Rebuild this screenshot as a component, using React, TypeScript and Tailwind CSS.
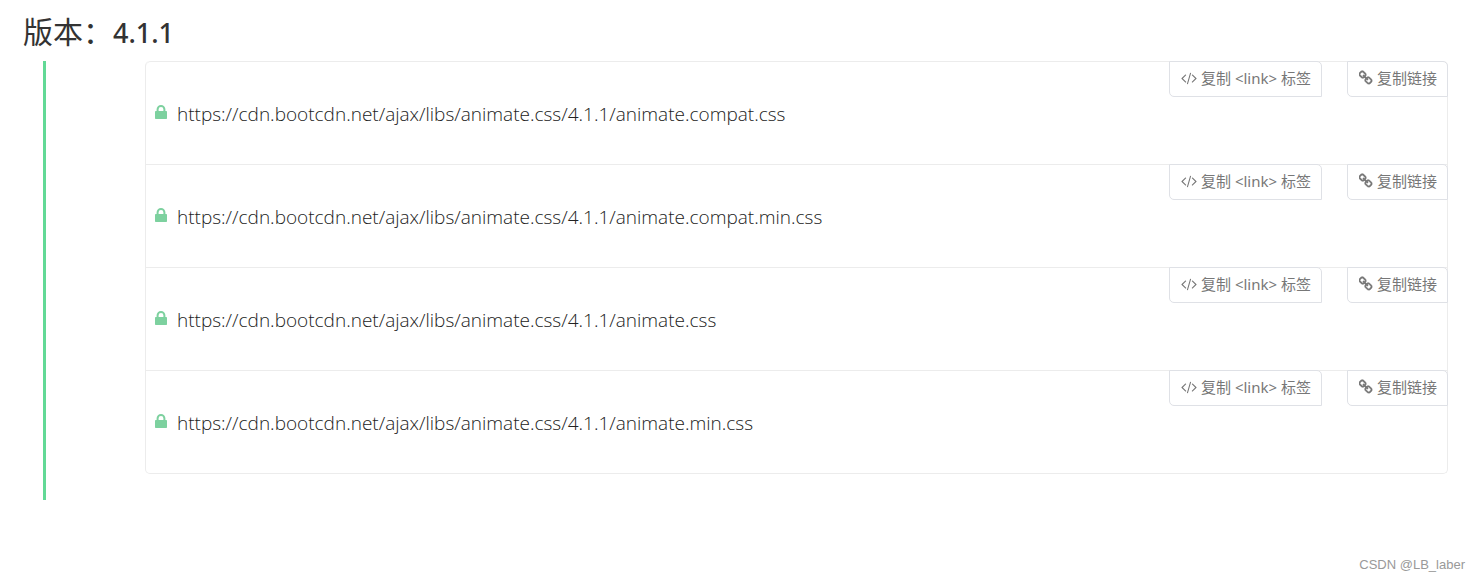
import React from "react";

const BASE = "https://cdn.bootcdn.net/ajax/libs/animate.css/4.1.1/";
const FILES = [
  "animate.compat.css",
  "animate.compat.min.css",
  "animate.css",
  "animate.min.css",
];

function LockIcon() {
  return (
    <svg viewBox="0 0 12 14" className="mb-1 h-3.5 w-3 shrink-0" aria-hidden="true">
      <path d="M2.600 7V4.300a3.400 3.300 0 0 1 6.800 0V7" fill="none" stroke="#7dd19f" strokeWidth="2" />
      <rect x="0" y="6" width="12" height="8" rx="0.700" fill="#7dd19f" />
    </svg>
  );
}

function CodeIcon() {
  return (
    <svg viewBox="0 0 1920 1792" className="h-4 w-4 shrink-0" fill="currentColor" aria-hidden="true">
      <path d="M617 1399l-50 50q-10 10-23 10t-23-10l-466-466q-10-10-10-23t10-23l466-466q10-10 23-10t23 10l50 50q10 10 10 23t-10 23l-393 393 393 393q10 10 10 23t-10 23zm591-1067l-373 1291q-4 13-15.500 19.500t-23.500 2.500l-62-17q-13-4-19.500-15.500t-2.500-24.500l373-1291q4-13 15.500-19.500t23.500-2.500l62 17q13 4 19.500 15.500t2.500 24.500zm657 651l-466 466q-10 10-23 10t-23-10l-50-50q-10-10-10-23t10-23l393-393-393-393q-10-10-10-23t10-23l50-50q10-10 23-10t23 10l466 466q10 10 10 23t-10 23z" />
    </svg>
  );
}

function LinkIcon() {
  return (
    <svg viewBox="64 0 1664 1792" className="h-4 w-3.5 shrink-0" fill="currentColor" stroke="currentColor" strokeWidth="30" aria-hidden="true">
      <path d="M1456 1216q0-40-28-68l-208-208q-28-28-68-28-42 0-72 32 3 3 19 18.500t21.500 21.500 15 19 13 25.500 3.500 27.500q0 40-28 68t-68 28q-15 0-27.500-3.500t-25.500-13-19-15-21.500-21.500-18.500-19q-33 31-33 73 0 40 28 68l206 207q27 27 68 27 40 0 68-26l147-146q28-28 28-67zm-703-705q0-40-28-68l-206-207q-28-28-68-28-39 0-68 27l-147 146q-28 28-28 67 0 40 28 68l208 208q27 27 68 27 42 0 72-31-3-3-19-18.500t-21.500-21.500-15-19-13-25.500-3.500-27.500q0-40 28-68t68-28q15 0 27.500 3.500t25.500 13 19 15 21.500 21.500 18.500 19q33-31 33-73zm895 705q0 120-85 203l-147 146q-83 83-203 83-121 0-204-85l-206-207q-83-83-83-203 0-123 88-209l-88-88q-86 88-208 88-120 0-204-84l-208-208q-84-84-84-204t85-203l147-146q83-83 203-83 121 0 204 85l206 207q83 83 83 203 0 123-88 209l88 88q86-88 208-88 120 0 204 84l208 208q84 84 84 204z" />
    </svg>
  );
}

function CopyButton({ children, value }: { children: React.ReactNode; value: string }) {
  return (
    <button
      type="button"
      onClick={() => navigator.clipboard?.writeText(value)}
      className="flex h-9 items-center gap-1 rounded-tr-[5px] rounded-bl-[5px] border border-[#dfe1e6] bg-white pr-2.5 pb-0.5 pl-[11px] text-[15px] whitespace-nowrap text-[#777777]"
    >
      {children}
    </button>
  );
}

function FileRow({ name }: { name: string }) {
  const url = BASE + name;
  return (
    <li className="flex items-start justify-between border-t border-[#ececec] first:rounded-t-[5px]">
      <div className="flex items-center gap-2.5 pt-[37px] pb-[35px] pl-[9px]">
        <LockIcon />
        <a href={url} className="font-['Open_Sans','Noto_Sans',sans-serif] text-[19px] leading-[30px] font-[340] text-[#222222]">
          {url}
        </a>
      </div>
      <div className="-mt-px -mr-px flex gap-[25px]">
        <CopyButton value={`<link href="${url}" rel="stylesheet">`}>
          <CodeIcon />
          复制 &lt;link&gt; 标签
        </CopyButton>
        <CopyButton value={url}>
          <LinkIcon />
          复制链接
        </CopyButton>
      </div>
    </li>
  );
}

export default function App() {
  return (
    <main className="bg-white pt-1 font-['Noto_Sans','Noto_Sans_CJK_SC',sans-serif]">
      <h1 className="flex items-baseline pl-[23px] text-[30px] leading-[56px] font-normal text-[#333333]">
        版本：<strong className="text-[27px] font-medium">4.1.1</strong>
      </h1>
      <section className="mr-8 ml-[43px] border-l-[3px] border-[#62d996] pb-[26px] pl-[99px]">
        <ul className="rounded-[5px] border-x border-b border-[#ececec]">
          {FILES.map((name) => (
            <FileRow key={name} name={name} />
          ))}
        </ul>
      </section>
      <footer className="pt-[55px] pr-[15px] text-right font-['Liberation_Sans',sans-serif] text-[13px] leading-5 text-[#999999]">
        CSDN @LB_laber
      </footer>
    </main>
  );
}
